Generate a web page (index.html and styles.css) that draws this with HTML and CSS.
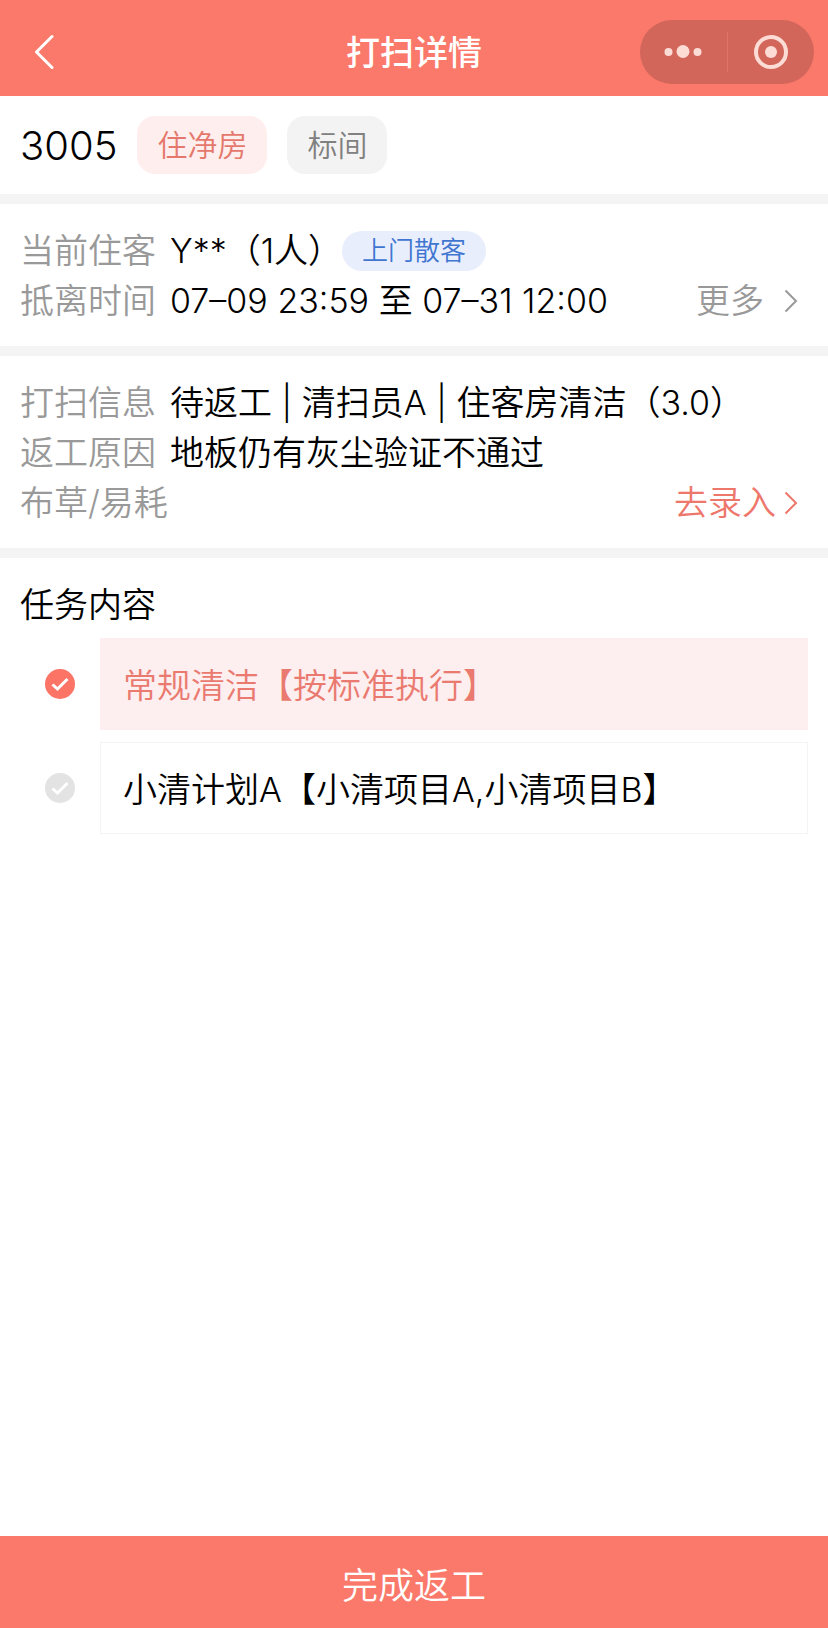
FILE: index.html
```html
<!DOCTYPE html>
<html lang="zh-CN">
<head>
    <meta charset="UTF-8">
    <meta name="viewport" content="width=device-width, initial-scale=1.0">
    <title>打扫详情</title>
    <link rel="stylesheet" href="styles.css">
</head>
<body>
    <header class="navbar">
        <button type="button" class="back" aria-label="返回">
            <svg width="20" height="36" viewBox="0 0 20 36" fill="none" stroke="#fff" stroke-width="3" stroke-linecap="round" stroke-linejoin="round">
                <path d="M18 2.500L2.500 18L18 33.500"/>
            </svg>
        </button>
        <h1>打扫详情</h1>
        <div class="capsule">
            <button type="button" aria-label="更多操作">
                <svg width="40" height="36" viewBox="0 0 40 36" fill="#fddcd6">
                    <circle cx="5.500" cy="18" r="4"/>
                    <circle cx="20" cy="17.500" r="6.500"/>
                    <circle cx="34.500" cy="18" r="4"/>
                </svg>
            </button>
            <span class="divider"></span>
            <button type="button" aria-label="关闭">
                <svg width="36" height="36" viewBox="0 0 36 36">
                    <circle cx="18" cy="18" r="15" fill="none" stroke="#fddcd6" stroke-width="4"/>
                    <circle cx="18" cy="18" r="6" fill="#fddcd6"/>
                </svg>
            </button>
        </div>
    </header>

    <main>
        <section class="room">
            <span class="room-no">3005</span>
            <span class="tag tag-red">住净房</span>
            <span class="tag tag-gray">标间</span>
        </section>

        <section class="info">
            <div class="row">
                <span class="label">当前住客</span>
                <span>Y**（1人）</span>
                <span class="badge">上门散客</span>
            </div>
            <div class="row">
                <span class="label">抵离时间</span>
                <span>07–09 23:59 至 07–31 12:00</span>
                <a href="#" class="more">更多
                    <svg class="arrow" width="14" height="24" viewBox="0 0 14 24"><path d="M1.500 1.500L12 12L1.500 22.500"/></svg>
                </a>
            </div>
        </section>

        <section class="info">
            <div class="row">
                <span class="label">打扫信息</span>
                <span>待返工 | 清扫员A | 住客房清洁（3.0）</span>
            </div>
            <div class="row">
                <span class="label">返工原因</span>
                <span>地板仍有灰尘验证不通过</span>
            </div>
            <div class="row">
                <span class="label">布草/易耗</span>
                <a href="#" class="more entry">去录入
                    <svg class="arrow" width="14" height="24" viewBox="0 0 14 24"><path d="M1.500 1.500L12 12L1.500 22.500"/></svg>
                </a>
            </div>
        </section>

        <section class="tasks">
            <h2>任务内容</h2>
            <div class="task">
                <input type="checkbox" id="task1" checked>
                <label for="task1">常规清洁【按标准执行】</label>
            </div>
            <div class="task">
                <input type="checkbox" id="task2">
                <label for="task2">小清计划A【小清项目A,小清项目B】</label>
            </div>
        </section>
    </main>

    <button type="button" class="submit">完成返工</button>
</body>
</html>
```
FILE: styles.css
```css
* {
    box-sizing: border-box;
}

body {
    margin: 0;
    min-height: 100vh;
    display: flex;
    flex-direction: column;
    background: #fff;
    color: #000;
    font-family: Inter, "Noto Sans CJK SC", sans-serif;
    font-size: 34px;
    font-weight: 350;
    line-height: 50px;
}

button {
    padding: 0;
    border: none;
    background: none;
    color: inherit;
    font: inherit;
    cursor: pointer;
}

a {
    text-decoration: none;
}

svg {
    display: block;
}

main {
    flex: 1;
}

/* 顶部导航 */
.navbar {
    display: grid;
    grid-template-columns: 1fr auto 1fr;
    align-items: center;
    height: 96px;
    padding: 8px 14px 0 34px;
    background: #fb796a;
    color: #fff;
}

.navbar h1 {
    margin: 0 20px 0 0;
    padding-top: 2px;
    font-size: 34px;
    font-weight: 500;
}

.back {
    justify-self: start;
}

.capsule {
    justify-self: end;
    display: flex;
    align-items: center;
    width: 174px;
    height: 64px;
    border-radius: 32px;
    background: #d2665a;
}

.capsule button {
    flex: 1;
    display: flex;
    align-items: center;
    justify-content: center;
}

.divider {
    width: 1px;
    height: 40px;
    background: #dc7468;
}

/* 房间 */
.room {
    display: flex;
    align-items: center;
    gap: 20px;
    height: 98px;
    padding: 0 20px;
}

.room-no {
    padding-top: 2px;
    font-size: 40px;
}

.tag {
    padding: 4px 20px;
    border-radius: 18px;
    font-size: 30px;
}

.tag-red {
    background: #feeeed;
    color: #e5786c;
}

.tag-gray {
    background: #f3f3f3;
    color: #808080;
}

/* 信息 */
.info,
.tasks {
    padding: 22px 20px 20px;
    border-top: 10px solid #f4f4f4;
}

.info {
    padding-right: 30px;
}

.row {
    display: flex;
    align-items: center;
    height: 50px;
    white-space: nowrap;
}

.label {
    min-width: 136px;
    margin-right: 14px;
    color: #999;
}

.badge {
    padding: 0 20px;
    border-radius: 20px;
    background: #e9eefd;
    color: #4076d0;
    font-size: 26px;
    line-height: 40px;
}

.more {
    display: flex;
    align-items: center;
    gap: 20px;
    margin-left: auto;
    color: #999;
}

.entry {
    gap: 8px;
    color: #ee776c;
}

.arrow {
    fill: none;
    stroke: currentColor;
    stroke-width: 2;
}

/* 任务 */
.tasks h2 {
    margin: 0 0 8px;
    font-size: 34px;
    font-weight: 350;
}

.task {
    display: flex;
    align-items: center;
    margin-bottom: 12px;
}

.task input {
    appearance: none;
    flex: none;
    width: 30px;
    height: 30px;
    margin: 0 25px;
    border-radius: 50%;
    background: #e3e3e3 url("data:image/svg+xml,%3Csvg xmlns='http://www.w3.org/2000/svg' viewBox='0 0 30 30' fill='none' stroke='white' stroke-width='3'%3E%3Cpath d='M7.500 15.500L12.500 20L22.500 10'/%3E%3C/svg%3E");
}

.task input:checked {
    background-color: #fb7466;
}

.task label {
    flex: 1;
    padding: 22px 22px 18px;
    border: 1px solid #f4f4f4;
}

.task input:checked + label {
    border-color: #fdeeef;
    background: #fdeeef;
    color: #ea7a70;
}

/* 底部按钮 */
.submit {
    height: 92px;
    padding-top: 8px;
    background: #fb796a;
    color: #fff;
    font-size: 36px;
}
```
